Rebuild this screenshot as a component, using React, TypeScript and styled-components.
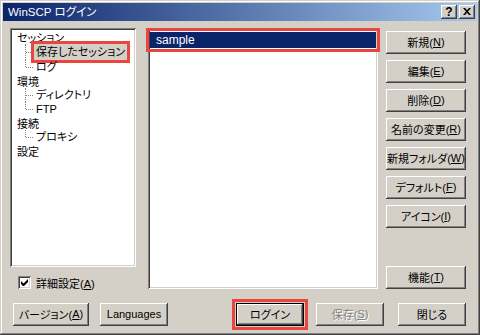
import React from "react";
import styled, { createGlobalStyle, css } from "styled-components";

const FACE = "#D4D0C8";
const RED = "#E8463F";

const Global = createGlobalStyle`
  html, body { margin: 0; padding: 0; background: ${FACE}; }
  * { box-sizing: border-box; }
`;

const raised = css`
  box-shadow: inset -1px -1px #404040, inset 1px 1px #fff, inset -2px -2px #808080,
    inset 2px 2px ${FACE};
`;

const sunken = css`
  box-shadow: inset 1px 1px #808080, inset -1px -1px #fff, inset 2px 2px #404040,
    inset -2px -2px ${FACE};
`;

const Window = styled.div`
  width: 480px;
  height: 335px;
  background: ${FACE};
  padding: 3px;
  display: flex;
  flex-direction: column;
  box-shadow: inset -1px -1px #404040, inset 1px 1px ${FACE}, inset -2px -2px #808080,
    inset 2px 2px #fff;
  font-family: "Liberation Sans", "Noto Sans CJK JP", sans-serif;
  font-size: 11px;
  color: #000;
  font-feature-settings: "palt";
`;

const TitleBar = styled.div`
  height: 18px;
  display: flex;
  align-items: center;
  gap: 2px;
  padding: 0 2px 0 5px;
  background: linear-gradient(to right, #0a246a, #a6caf0);
  color: #fff;
`;

const Title = styled.span`
  flex: 1;
  font-size: 11.5px;
  line-height: 18px;
  white-space: nowrap;
`;

const CaptionButton = styled.div`
  width: 16px;
  height: 14px;
  background: ${FACE};
  ${raised};
  display: flex;
  align-items: center;
  justify-content: center;
  color: #000;
  font-family: "Liberation Sans", sans-serif;
  font-weight: bold;
  font-size: 12px;
  line-height: 14px;
  padding-bottom: 1px;
`;

const Body = styled.div`
  flex: 1;
  display: flex;
  flex-direction: column;
  padding: 7px 11px 6px 7px;
`;

const TopArea = styled.div`
  display: flex;
  height: 261px;
`;

const LeftCol = styled.div`
  width: 126px;
  display: flex;
  flex-direction: column;
`;

const Tree = styled.div`
  height: 241px;
  background: #fff;
  ${sunken};
  padding: 2px;
`;

const TopRow = styled.div<{ $h: number }>`
  height: ${(p) => p.$h}px;
  display: flex;
  align-items: center;
  padding-left: 5px;
  white-space: nowrap;
`;

const ChildRow = styled.div<{ $h: number; $last?: boolean }>`
  position: relative;
  height: ${(p) => p.$h}px;
  display: flex;
  align-items: center;
  padding-left: 22px;
  white-space: nowrap;
  &::before {
    content: "";
    position: absolute;
    left: 13px;
    top: 0;
    height: ${(p) => (p.$last ? Math.floor(p.$h / 2) : p.$h)}px;
    border-left: 1px dotted #808080;
  }
  &::after {
    content: "";
    position: absolute;
    left: 14px;
    top: ${(p) => Math.floor(p.$h / 2)}px;
    width: 7px;
    border-top: 1px dotted #808080;
  }
`;

const NodeLabel = styled.span<{ $selected?: boolean }>`
  display: inline-block;
  padding: 0 2px;
  line-height: 16px;
  height: 16px;
  ${(p) =>
    p.$selected &&
    css`
      background: ${FACE};
      outline: 3px solid ${RED};
    `}
`;

const CheckRow = styled.label`
  margin-top: 9px;
  padding-left: 8px;
  display: flex;
  align-items: center;
  gap: 5px;
  height: 13px;
  white-space: nowrap;
`;

const CheckBox = styled.span`
  width: 13px;
  height: 13px;
  background: #fff;
  ${sunken};
  display: flex;
  align-items: center;
  justify-content: center;
`;

const ListBox = styled.div`
  width: 230px;
  margin-left: 12px;
  background: #fff;
  ${sunken};
  padding: 4px 2px 2px 2px;
`;

const ListItem = styled.div<{ $selected?: boolean }>`
  height: 16px;
  line-height: 16px;
  padding-left: 6px;
  font-size: 12px;
  ${(p) =>
    p.$selected &&
    css`
      background: #0a246a;
      color: #fff;
      outline: 3px solid ${RED};
      outline-offset: 1px;
    `}
`;

const SideButtons = styled.div`
  width: 80px;
  margin-left: 8px;
  display: flex;
  flex-direction: column;
  gap: 6px;
  padding-top: 3px;
  & > :last-child {
    margin-top: auto;
  }
`;

const BottomRow = styled.div`
  margin-top: 14px;
  padding-left: 3px;
  display: flex;
  height: 23px;
`;

const Btn = styled.button<{ $w?: number; $gap?: number; $default?: boolean; $mark?: boolean }>`
  width: ${(p) => p.$w ?? 80}px;
  height: 23px;
  margin-left: ${(p) => p.$gap ?? 0}px;
  flex: none;
  background: ${FACE};
  border: none;
  padding: 0 0 1px;
  font: inherit;
  font-feature-settings: "palt";
  color: #000;
  white-space: nowrap;
  display: flex;
  align-items: center;
  justify-content: center;
  ${raised};
  ${(p) =>
    p.$default &&
    css`
      box-shadow: inset 0 0 0 1px #000, inset -2px -2px #404040, inset 2px 2px #fff,
        inset -3px -3px #808080;
    `}
  ${(p) =>
    p.$mark &&
    css`
      outline: 3px solid ${RED};
      outline-offset: 1px;
    `}
  &:disabled {
    color: #808080;
    text-shadow: 1px 1px #fff;
  }
  u {
    text-underline-offset: 1px;
  }
`;

export default function App() {
  return (
    <>
      <Global />
      <Window>
        <TitleBar>
          <Title>WinSCP ログイン</Title>
          <CaptionButton>?</CaptionButton>
          <CaptionButton>
            <svg width="8" height="7" viewBox="0 0 8 7">
              <path d="M0 0h2l2 2.2L6 0h2L5 3.5 8 7H6L4 4.8 2 7H0l3-3.5z" fill="#000" />
            </svg>
          </CaptionButton>
        </TitleBar>
        <Body>
          <TopArea>
            <LeftCol>
              <Tree>
                <TopRow $h={14}>セッション</TopRow>
                <ChildRow $h={16}>
                  <NodeLabel $selected>保存したセッション</NodeLabel>
                </ChildRow>
                <ChildRow $h={14} $last>
                  <NodeLabel>ログ</NodeLabel>
                </ChildRow>
                <TopRow $h={14}>環境</TopRow>
                <ChildRow $h={14}>
                  <NodeLabel>ディレクトリ</NodeLabel>
                </ChildRow>
                <ChildRow $h={14} $last>
                  <NodeLabel>FTP</NodeLabel>
                </ChildRow>
                <TopRow $h={14}>接続</TopRow>
                <ChildRow $h={14} $last>
                  <NodeLabel>プロキシ</NodeLabel>
                </ChildRow>
                <TopRow $h={14}>設定</TopRow>
              </Tree>
              <CheckRow>
                <CheckBox>
                  <svg width="7" height="7" viewBox="0 0 7 7">
                    <path d="M0 2v3l2 2h1l4-4V0L2.5 4.5z" fill="#000" />
                  </svg>
                </CheckBox>
                <span>
                  詳細設定(<u>A</u>)
                </span>
              </CheckRow>
            </LeftCol>
            <ListBox>
              <ListItem $selected>sample</ListItem>
            </ListBox>
            <SideButtons>
              <Btn>
                新規(<u>N</u>)
              </Btn>
              <Btn>
                編集(<u>E</u>)
              </Btn>
              <Btn>
                削除(<u>D</u>)
              </Btn>
              <Btn>
                名前の変更(<u>R</u>)
              </Btn>
              <Btn>
                新規フォルダ(<u>W</u>)
              </Btn>
              <Btn>
                デフォルト(<u>F</u>)
              </Btn>
              <Btn>
                アイコン(<u>I</u>)
              </Btn>
              <Btn>
                機能(<u>T</u>)
              </Btn>
            </SideButtons>
          </TopArea>
          <BottomRow>
            <Btn $w={76}>
              バージョン(<u>A</u>)
            </Btn>
            <Btn $w={68} $gap={11}>
              Languages
            </Btn>
            <Btn $w={68} $gap={68} $default $mark>
              ログイン
            </Btn>
            <Btn $w={68} $gap={12} disabled>
              保存(<u>S</u>)
            </Btn>
            <Btn $w={68} $gap={14}>
              閉じる
            </Btn>
          </BottomRow>
        </Body>
      </Window>
    </>
  );
}
